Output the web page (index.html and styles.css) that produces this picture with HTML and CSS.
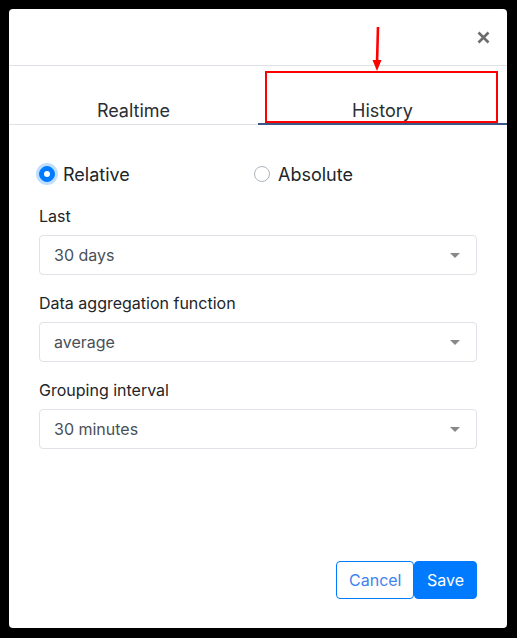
FILE: index.html
```html
<!DOCTYPE html>
<html>
<head>
<meta charset="utf-8">
<link rel="stylesheet" href="styles.css">
</head>
<body>
<div class="modal">
  <div class="modal-header">
    <button class="close" aria-label="Close">
      <svg width="13" height="13" viewBox="0 0 13 13"><path d="M1.5 1.5 L11.5 11.5 M11.5 1.5 L1.5 11.5" stroke="#6c6c6c" stroke-width="2.6" stroke-linecap="butt"/></svg>
    </button>
  </div>
  <div class="tabs">
    <div class="tab">Realtime</div>
    <div class="tab active">History</div>
  </div>
  <div class="modal-body">
    <div class="radios">
      <label class="radio"><span class="dot checked"></span>Relative</label>
      <label class="radio"><span class="dot"></span>Absolute</label>
    </div>
    <div class="field">
      <div class="label">Last</div>
      <div class="select">30 days<span class="caret"></span></div>
    </div>
    <div class="field">
      <div class="label">Data aggregation function</div>
      <div class="select">average<span class="caret"></span></div>
    </div>
    <div class="field">
      <div class="label">Grouping interval</div>
      <div class="select">30 minutes<span class="caret"></span></div>
    </div>
  </div>
  <div class="modal-footer">
    <button class="btn btn-outline">Cancel</button>
    <button class="btn btn-primary">Save</button>
  </div>
  <div class="annot-box"></div>
  <svg class="annot-arrow" width="14" height="46" viewBox="0 0 14 46">
    <path d="M8 0 L7 36" stroke="#ff0000" stroke-width="2.6" fill="none"/>
    <path d="M2.5 33 L11.5 33 L7 44 Z" fill="#ff0000"/>
  </svg>
</div>
</body>
</html>
```

FILE: styles.css
```css
* { box-sizing: border-box; }
html, body { margin: 0; padding: 0; background: #000; }
body {
  padding: 9px 10px 10px 9px;
  font-family: Inter, "Noto Sans", "Liberation Sans", sans-serif;
  color: #212529;
}
.modal {
  position: relative;
  width: 498px;
  height: 619px;
  background: #fff;
  border-radius: 4px;
  display: flex;
  flex-direction: column;
}
.modal-header {
  height: 57px;
  border-bottom: 1px solid #dee2e6;
  display: flex;
  justify-content: flex-end;
  align-items: flex-start;
  padding: 22px 17px 0 0;
}
.close {
  border: 0;
  background: none;
  padding: 0;
  width: 13px;
  height: 13px;
  display: block;
}
.close svg { display: block; }
.tabs {
  display: grid;
  grid-template-columns: 249px 249px;
  height: 59px;
  border-bottom: 1px solid #dee2e6;
}
.tab {
  display: flex;
  align-items: flex-end;
  justify-content: center;
  padding-bottom: 3px;
  font-size: 18px;
  color: #2a2e33;
}
.tab.active {
  border-bottom: 2px solid #3b5687;
  margin-bottom: -1px;
  padding-bottom: 2px;
}
.modal-body {
  flex: 1;
  padding: 30px 30px 0 30px;
}
.radios {
  display: grid;
  grid-template-columns: 215px 1fr;
  height: 38px;
  align-items: center;
  font-size: 18px;
  color: #212529;
  margin-bottom: 11px;
}
.radio {
  display: flex;
  align-items: center;
  gap: 8px;
}
.dot {
  width: 16px;
  height: 16px;
  border-radius: 50%;
  border: 1px solid #adb5bd;
  background: #fff;
  display: inline-block;
  position: relative;
}
.dot.checked {
  background: #007bff;
  border-color: #007bff;
  box-shadow: 0 0 0 3px rgba(0, 123, 255, 0.25);
}
.dot.checked::after {
  content: "";
  position: absolute;
  left: 4px;
  top: 4px;
  width: 6px;
  height: 6px;
  border-radius: 50%;
  background: #fff;
}
.field { margin-bottom: 16px; }
.label {
  font-size: 16px;
  line-height: 24px;
  margin-bottom: 7px;
  color: #212529;
}
.select {
  height: 40px;
  border: 1px solid #dfe2e6;
  border-radius: 4px;
  display: flex;
  align-items: center;
  justify-content: space-between;
  padding: 0 16px 0 14px;
  font-size: 16px;
  color: #495057;
}
.caret {
  width: 0;
  height: 0;
  border-left: 5px solid transparent;
  border-right: 5px solid transparent;
  border-top: 5px solid #888;
}
.modal-footer {
  display: flex;
  justify-content: flex-end;
  padding: 0 30px 29px 0;
}
.btn {
  height: 38px;
  font-family: inherit;
  font-size: 16px;
  border-radius: 4px;
  border: 1px solid #007bff;
  padding: 0 12px;
}
.btn-outline {
  background: #fff;
  color: #3f83f0;
  width: 78px;
}
.btn-primary {
  background: #007bff;
  color: #fff;
  width: 63px;
}
.annot-box {
  position: absolute;
  left: 256px;
  top: 62px;
  width: 233px;
  height: 52px;
  border: 2px solid #ff0000;
}
.annot-arrow {
  position: absolute;
  left: 361px;
  top: 18px;
}
```
